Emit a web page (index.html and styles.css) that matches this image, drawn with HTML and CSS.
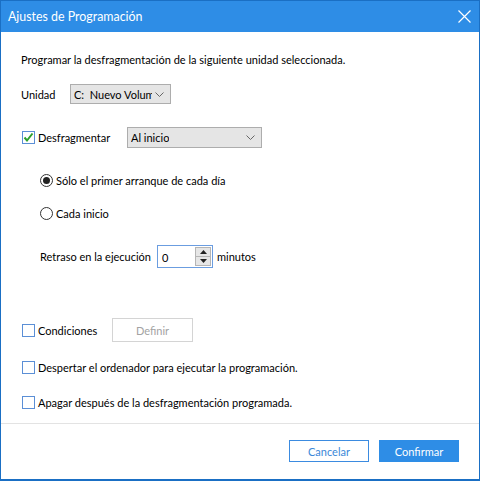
FILE: index.html
```html
<!DOCTYPE html>
<html lang="es">
<head>
<meta charset="utf-8">
<title>Ajustes de Programación</title>
<link rel="stylesheet" href="styles.css">
</head>
<body>
<div class="window">
  <div class="titlebar">
    <span class="title">Ajustes de Programación</span>
    <svg class="close" width="13" height="13" viewBox="0 0 13 13"><path d="M0.5 0.5 L12.5 12.5 M12.5 0.5 L0.5 12.5" stroke="#fff" stroke-width="1.2" fill="none"/></svg>
  </div>
  <div class="content">
    <div class="row r-intro">Programar la desfragmentación de la siguiente unidad seleccionada.</div>
    <div class="row r-unit">
      <span class="lbl-unit">Unidad</span>
      <div class="select sel-unit"><span class="sel-text">C:&nbsp; Nuevo Volum</span><svg class="chev" width="9" height="5" viewBox="0 0 9 5"><path d="M0.5 0.5 L4.5 4.5 L8.5 0.5" stroke="#666" fill="none"/></svg></div>
    </div>
    <div class="row r-defrag">
      <span class="chk checked"><svg width="13" height="13" viewBox="0 0 13 13"><path d="M2.5 6.5 L5 9.5 L10.5 2.5" stroke="#2ca02c" stroke-width="2" fill="none"/></svg></span>
      <span class="lbl-defrag">Desfragmentar</span>
      <div class="select sel-when"><span class="sel-text">Al inicio</span><svg class="chev" width="9" height="5" viewBox="0 0 9 5"><path d="M0.5 0.5 L4.5 4.5 L8.5 0.5" stroke="#666" fill="none"/></svg></div>
    </div>
    <div class="row r-radio1 indent">
      <span class="radio on"></span><span>Sólo el primer arranque de cada día</span>
    </div>
    <div class="row r-radio2 indent">
      <span class="radio"></span><span>Cada inicio</span>
    </div>
    <div class="row r-delay indent">
      <span class="lbl-delay">Retraso en la ejecución</span>
      <div class="spin">
        <span class="spin-val">0</span>
        <div class="spin-btns">
          <span class="sbtn"><svg width="7" height="4" viewBox="0 0 7 4"><path d="M3.5 0 L7 4 L0 4 Z" fill="#222"/></svg></span>
          <span class="sbtn"><svg width="7" height="4" viewBox="0 0 7 4"><path d="M0 0 L7 0 L3.5 4 Z" fill="#222"/></svg></span>
        </div>
      </div>
      <span class="lbl-min">minutos</span>
    </div>
    <div class="row r-cond">
      <span class="chk"></span>
      <span class="lbl-cond">Condiciones</span>
      <span class="btn-define">Definir</span>
    </div>
    <div class="row r-wake">
      <span class="chk"></span><span>Despertar el ordenador para ejecutar la programación.</span>
    </div>
    <div class="row r-off">
      <span class="chk"></span><span>Apagar después de la desfragmentación programada.</span>
    </div>
  </div>
  <div class="footer">
    <span class="btn btn-cancel">Cancelar</span>
    <span class="btn btn-ok">Confirmar</span>
  </div>
</div>
</body>
</html>
```
FILE: styles.css
```css
html, body {
  margin: 0;
  padding: 0;
  background: #ffffff;
}
body {
  font-family: Lato, "Liberation Sans", Arial, sans-serif;
  font-size: 11px;
  color: #000;
}
.window {
  width: 480px;
  height: 481px;
  box-sizing: border-box;
  border: 1px solid #1a6fc4;
  border-bottom-width: 2px;
  display: flex;
  flex-direction: column;
  background: #fff;
}
.titlebar {
  height: 31px;
  background: #2e8de6;
  display: flex;
  align-items: center;
  justify-content: space-between;
  padding: 0 7px 0 7px;
  flex-shrink: 0;
}
.title {
  color: #fff;
  font-size: 12.4px;
  padding-bottom: 1px;
}
.close {
  margin-right: 1px;
}
.content {
  flex: 1;
  padding-left: 20px;
  display: flex;
  flex-direction: column;
}
.row {
  display: flex;
  align-items: center;
  white-space: nowrap;
}
.indent { padding-left: 19px; }
.r-intro { height: 16px; margin-top: 19px; }
.r-unit { height: 20px; margin-top: 17px; }
.r-defrag { height: 21px; margin-top: 23px; }
.r-radio1 { height: 16px; margin-top: 24px; }
.r-radio2 { height: 16px; margin-top: 17px; }
.r-delay { height: 23px; margin-top: 24px; }
.r-cond { height: 24px; margin-top: 50px; }
.r-wake { height: 16px; margin-top: 17px; }
.r-off { height: 16px; margin-top: 19px; }

.lbl-unit { width: 49px; }
.select {
  box-sizing: border-box;
  background: #e5e5e5;
  border: 1px solid #adadad;
  display: flex;
  align-items: center;
  justify-content: space-between;
  padding: 0 6px 0 3px;
  height: 100%;
}
.sel-unit { width: 101px; }
.sel-when { width: 135px; }
.sel-text { white-space: nowrap; overflow: hidden; }
.sel-unit .sel-text { width: 78px; }
.chev { flex-shrink: 0; }

.chk {
  box-sizing: border-box;
  width: 13px;
  height: 13px;
  border: 1px solid #5b8fd6;
  background: #fff;
  margin-left: 1px;
  margin-right: 3px;
  display: inline-flex;
  flex-shrink: 0;
}
.chk svg { margin: -1px; }
.lbl-defrag { width: 89px; }

.radio {
  box-sizing: border-box;
  width: 13px;
  height: 13px;
  border: 1px solid #333;
  border-radius: 50%;
  margin-right: 3px;
  display: inline-flex;
  align-items: center;
  justify-content: center;
  flex-shrink: 0;
}
.radio.on::after {
  content: "";
  width: 7px;
  height: 7px;
  border-radius: 50%;
  background: #222;
}

.lbl-delay { width: 117px; }
.spin {
  box-sizing: border-box;
  width: 56px;
  height: 23px;
  border: 1px solid #6b9de0;
  display: flex;
  align-items: center;
  justify-content: space-between;
  padding: 1px 1px 1px 4px;
  margin-right: 4px;
}
.spin-val { padding-top: 2px; }
.spin-btns {
  display: flex;
  flex-direction: column;
  height: 100%;
  width: 16px;
  border: 1px solid #b5b5b5;
  box-sizing: border-box;
}
.sbtn {
  flex: 1;
  background: #e6e6e6;
  display: flex;
  align-items: center;
  justify-content: center;
}
.sbtn + .sbtn { border-top: 1px solid #b5b5b5; }

.lbl-cond { width: 74px; }
.btn-define {
  box-sizing: border-box;
  width: 81px;
  height: 24px;
  border: 1px solid #d4d4d4;
  color: #a3a3a3;
  display: flex;
  align-items: center;
  justify-content: center;
}

.footer {
  box-sizing: border-box;
  height: 56px;
  border-top: 1px solid #e3e3e3;
  display: flex;
  justify-content: flex-end;
  align-items: flex-start;
  padding: 16px 20px 0 0;
  gap: 10px;
  flex-shrink: 0;
}
.btn {
  box-sizing: border-box;
  width: 80px;
  height: 22px;
  display: flex;
  align-items: center;
  justify-content: center;
}
.btn-cancel {
  border: 1px solid #3b8be0;
  color: #3b88d8;
  background: #fff;
}
.btn-ok {
  background: #2e8de6;
  color: #fff;
}
```
